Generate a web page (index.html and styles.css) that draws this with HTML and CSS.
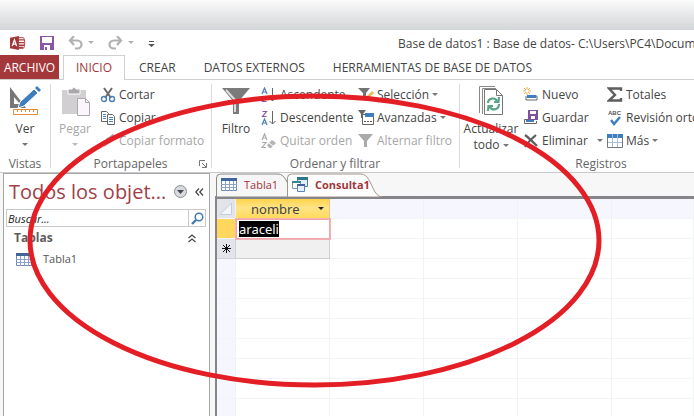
FILE: index.html
```html
<!DOCTYPE html>
<html lang="es">
<head>
<meta charset="utf-8">
<title>Base de datos1</title>
<link rel="stylesheet" href="styles.css">
</head>
<body>
<div class="app">
  <div class="desktop"></div>
  <header class="titlebar">
    <div class="quick">
      <svg class="logo" width="16" height="16" viewBox="0 0 18 16"><path d="M9 2h6c2 0 2 12 0 12H9z" fill="#fff" stroke="#a4373a"/><path d="M10 4.500h6M10 7.500h6M10 10.500h6M10 13h5" stroke="#a4373a" stroke-width="1.500"/><path d="M0 2 10 0v16L0 14z" fill="#a4373a"/><path d="M2.500 11.500 5 4.500l2.500 7M3.500 9.300h3" fill="none" stroke="#fff" stroke-width="1.500"/></svg>
      <button class="tool" aria-label="Guardar"><svg width="14" height="14" viewBox="0 0 14 14"><path d="M0 0h14v14H0z" fill="#8a55a8"/><path d="M2 1h10v6H2zM4 9h6v5H4z" fill="#fff"/><path d="M5 11h2v3H5z" fill="#8a55a8"/></svg></button>
      <button class="tool" aria-label="Deshacer"><svg width="26" height="14" viewBox="0 0 26 14"><path d="M6 0 2 4.500l4 4.500M2 4.500h7c6 0 6 8 0 8H7" fill="none" stroke="#b1b1b1" stroke-width="2.200"/><path d="M20 5h6l-3 3z" fill="#b1b1b1"/></svg></button>
      <button class="tool" aria-label="Rehacer"><svg width="26" height="14" viewBox="0 0 26 14"><path d="m9 0 4 4.500L9 9M13 4.500H6c-6 0-6 8 0 8h2" fill="none" stroke="#b1b1b1" stroke-width="2.200"/><path d="M20 5h6l-3 3z" fill="#b1b1b1"/></svg></button>
      <button class="tool" aria-label="Personalizar"><svg width="7" height="14" viewBox="0 0 7 14"><path d="M1 5.500h5" stroke="#555"/><path d="M0 8h7l-3.500 3z" fill="#555"/></svg></button>
    </div>
    <h1 class="title">Base de datos1 : Base de datos- C:\Users\PC4\Documen</h1>
  </header>
  <nav class="menu">
    <button class="menu-item file">ARCHIVO</button>
    <button class="menu-item active">INICIO</button>
    <button class="menu-item">CREAR</button>
    <button class="menu-item">DATOS EXTERNOS</button>
    <button class="menu-item">HERRAMIENTAS DE BASE DE DATOS</button>
  </nav>
  <div class="ribbon">
    <section class="group views">
      <div class="controls">
        <button class="big"><svg width="32" height="30" viewBox="0 0 32 30"><path d="M1 1v21h16z" fill="#777"/><path d="M5 11v7h6z" fill="#fff"/><path d="m9 22 2-6L25 3l4 4-14 13z" fill="#3e7ec0" stroke="#fff"/><path d="m26 2 2-2 4 4-2 2z" fill="#3e7ec0"/><path d="M4.500 23.500h24v5h-24z" fill="#fff" stroke="#e58a3c"/><path d="M8.500 24v2m4-2v2m4-2v2m4-2v2m4-2v2" stroke="#e58a3c"/></svg><span>Ver</span><i class="arrow"></i></button>
      </div>
      <h2>Vistas</h2>
    </section>
    <section class="group clipboard">
      <div class="controls">
        <button class="big off"><svg width="32" height="30" viewBox="0 0 32 30"><path d="M3 4h24v24H3z" fill="#d2cfd3"/><path d="M9 8V3h4q2-4 4 0h4v5z" fill="#aaa8ab" stroke="#fff"/><path d="M18.500 12.500h8l4 4v13h-12z" fill="#fbf6fc" stroke="#aaa"/><path d="M26.500 12.500v4h4" fill="none" stroke="#aaa"/></svg><span>Pegar</span><i class="arrow"></i></button>
        <div class="stack">
          <button class="small"><svg width="16" height="16" viewBox="0 0 16 16"><path d="m4 1 7 10M12 1 5 11" stroke="#686868" stroke-width="2"/><circle cx="4" cy="12" r="2.500" fill="none" stroke="#4b7fb5" stroke-width="1.400"/><circle cx="12" cy="12" r="2.500" fill="none" stroke="#4b7fb5" stroke-width="1.400"/></svg><span>Cortar</span></button>
          <button class="small"><svg width="16" height="16" viewBox="0 0 16 16"><path d="M1.500 1.500h5l2 2v8h-7z" fill="#fff" stroke="#666"/><path d="M3 4.500h3m-3 2h3m-3 2h3" stroke="#4b7fb5"/><path d="M7.500 4.500h5l2 2v8h-7z" fill="#fff" stroke="#666"/><path d="M9 7.500h4m-4 2h4m-4 2h4" stroke="#4b7fb5"/></svg><span>Copiar</span></button>
          <button class="small off"><svg width="16" height="16" viewBox="0 0 16 16"><path d="m1 11 5-5 4 4-5 4z" fill="#d6d2d6"/><path d="m7 5 4 4m-2-3 5-4" stroke="#aaa" stroke-width="3"/></svg><span>Copiar formato</span></button>
        </div>
      </div>
      <h2>Portapapeles</h2>
      <button class="launcher" aria-label="Opciones del portapapeles"><svg width="8" height="8" viewBox="0 0 8 8"><path d="M.5 6V.5H6M3 3l4 4M7.500 3v4.500H3" fill="none" stroke="#777"/></svg></button>
    </section>
    <section class="group sort">
      <div class="controls">
        <button class="big"><svg width="28" height="30" viewBox="0 0 28 30"><path d="M0 2h28L17 15v13h-6V15z" fill="#7b7b7b"/><path d="m4 4 9 10v12" fill="none" stroke="#ddd" stroke-width="2"/></svg><span>Filtro</span></button>
        <div class="stack">
          <button class="small"><svg width="16" height="16" viewBox="0 0 16 16"><path d="m1 7 2.500-6L6 7M2 5h3" fill="none" stroke="#4b7fb5" stroke-width="1.200"/><path d="M1.500 9.500h4l-4 5h4" fill="none" stroke="#8a55a8" stroke-width="1.200"/><path d="M11.500 1v13m-3-3 3 3 3-3" fill="none" stroke="#666"/></svg><span>Ascendente</span></button>
          <button class="small"><svg width="16" height="16" viewBox="0 0 16 16"><path d="M1.500 1.500h4l-4 5h4" fill="none" stroke="#8a55a8" stroke-width="1.200"/><path d="m1 15 2.500-6L6 15m-4-2h3" fill="none" stroke="#4b7fb5" stroke-width="1.200"/><path d="M11.500 1v13m-3-3 3 3 3-3" fill="none" stroke="#666"/></svg><span>Descendente</span></button>
          <button class="small off"><svg width="16" height="16" viewBox="0 0 16 16"><path d="m1 7 2.500-6L6 7M2 5h3M1 9.500h4l-4 5h4" fill="none" stroke="#aaa" stroke-width="1.200"/><path d="m6 12 5-5 4 3-5 5H8z" fill="#b5b5b5"/><path d="m8 10 4 3" stroke="#fff"/></svg><span>Quitar orden</span></button>
        </div>
        <div class="stack">
          <button class="small"><svg width="16" height="16" viewBox="0 0 16 16"><path d="M0 1h12L8 6v7H5V6z" fill="#737373"/><path d="m8 12 1-3 5-5 2 2-5 5z" fill="#f0b95c"/></svg><span>Selección</span><i class="arrow"></i></button>
          <button class="small"><svg width="16" height="16" viewBox="0 0 16 16"><path d="M4.500 4.500h11v10h-11z" fill="#fff" stroke="#666"/><path d="M7 3h9v4H7z" fill="#3e7ec0"/><path d="M0 0h8L5 4v4H3V4z" fill="#666"/><path d="M6 11.500h2m1 0h2m1 0h2" stroke="#555"/></svg><span>Avanzadas</span><i class="arrow"></i></button>
          <button class="small off"><svg width="16" height="16" viewBox="0 0 16 16"><path d="M0 1h15L9 8v6H6V8z" fill="#aaa"/></svg><span>Alternar filtro</span></button>
        </div>
      </div>
      <h2>Ordenar y filtrar</h2>
    </section>
    <section class="group records">
      <div class="controls">
        <button class="big"><svg width="28" height="30" viewBox="0 0 28 30"><path d="M2.500 27V.5H18M5.500 28V2.500H19" fill="none" stroke="#888"/><path d="M7.500 3.500h12l6 6v19h-18z" fill="#fff" stroke="#777"/><path d="M19.500 4v5.500h6" fill="none" stroke="#777"/><path d="M11 17c0-5 7-6 9-2m2-4-.5 5H17M22 18c0 6-7 7-9 3m-2 4 .5-5H16" fill="none" stroke="#5da387" stroke-width="2.200"/></svg><span>Actualizar<br>todo <i class="arrow"></i></span></button>
        <div class="stack">
          <button class="small"><svg width="16" height="16" viewBox="0 0 16 16"><path d="M7 9h7v4H3V9" fill="none" stroke="#666"/><path d="M4 8h9v3H4z" fill="#3e7ec0"/><path d="M4 0v8M0 4h8M1 1l6 6m0-6L1 7" stroke="#efad50"/><circle cx="4" cy="4" r="1.500" fill="#fff"/></svg><span>Nuevo</span></button>
          <button class="small"><svg width="16" height="16" viewBox="0 0 16 16"><path d="M5 9.500H1.500v4h12V11" fill="none" stroke="#666"/><path d="M3 10h8v2H3z" fill="#3e7ec0"/><path d="M5 0h10v10H5z" fill="#8050a0"/><path d="M7 1h6v3H7zM8 6h4v3H8z" fill="#fff"/></svg><span>Guardar</span></button>
          <button class="small"><svg width="16" height="16" viewBox="0 0 16 16"><path d="M2 2c4 3 8 7 12 11M13 2C8 6 5 9 2 14" fill="none" stroke="#5e5e5e" stroke-width="2.200"/></svg><span>Eliminar</span><i class="arrow apart"></i></button>
        </div>
        <div class="stack">
          <button class="small"><svg width="16" height="16" viewBox="0 0 16 16"><path d="M14 4V1.500H2L8 8l-6 5.500h12V11" fill="none" stroke="#5e5e5e" stroke-width="2.400"/></svg><span>Totales</span></button>
          <button class="small"><svg width="16" height="16" viewBox="0 0 16 16"><text x="1" y="5" class="abc">ABC</text><path d="m4 10 3 4 6-7" fill="none" stroke="#3e7ec0" stroke-width="2.400"/></svg><span>Revisión orto</span></button>
          <button class="small"><svg width="16" height="16" viewBox="0 0 16 16"><path d="M.5 1.500h15v13H.5z" fill="#fff" stroke="#777"/><path d="M0 1h16v4H0z" fill="#3e7ec0"/><path d="M5.500 1v13m5-13v13M1 9.500h14" stroke="#a9bdd0"/></svg><span>Más</span><i class="arrow"></i></button>
        </div>
      </div>
      <h2>Registros</h2>
    </section>
  </div>
  <main class="workspace">
    <aside class="pane">
      <div class="pane-head">
        <h2>Todos los objet...</h2>
        <button class="round" aria-label="Menú"><svg width="13" height="13" viewBox="0 0 13 13"><circle cx="6.500" cy="6.500" r="6" fill="#d9dade" stroke="#8c8f96"/><path d="M3 5h7L6.500 9z" fill="#444a58"/></svg></button>
        <button aria-label="Contraer panel"><svg width="9" height="8" viewBox="0 0 9 8"><path d="M4 .5.800 4 4 7.500M8 .5 4.800 4 8 7.500" fill="none" stroke="#444" stroke-width="1.200"/></svg></button>
      </div>
      <div class="search">
        <input type="text" placeholder="Buscar..." aria-label="Buscar">
        <button aria-label="Buscar"><svg width="13" height="13" viewBox="0 0 13 13"><circle cx="8" cy="5" r="3.800" fill="#fff" stroke="#4579ad" stroke-width="1.500"/><path d="m5 8-4 4" stroke="#4579ad" stroke-width="2.400"/></svg></button>
      </div>
      <button class="section-head"><span>Tablas</span><svg width="8" height="9" viewBox="0 0 8 9"><path d="M.5 4 4 1l3.500 3M.5 8 4 5l3.500 3" fill="none" stroke="#444" stroke-width="1.200"/></svg></button>
      <a class="object" href="#"><svg width="16" height="13" viewBox="0 0 16 13"><path d="M.5.500h15v12H.5z" fill="#fff" stroke="#7188b0"/><path d="M0 0h16v3H0z" fill="#42659c"/><path d="M4.500 3v10m4-10v10m4-10v10M0 6.500h16M0 9.500h16" stroke="#8ba3cb"/></svg><span>Tabla1</span></a>
    </aside>
    <section class="document">
      <div class="doc-tabs">
        <button class="doc-tab"><svg class="shape" viewBox="0 0 84 24" preserveAspectRatio="none"><path d="M.5 24V5q0-4 4-4H62c7 0 9 9 14 18q3 5 7 5z" fill="#f6f6f7" stroke="#888"/></svg><svg width="16" height="13" viewBox="0 0 16 13"><path d="M.5.500h15v12H.5z" fill="#fff" stroke="#7188b0"/><path d="M0 0h16v3H0z" fill="#42659c"/><path d="M4.500 3v10m4-10v10m4-10v10M0 6.500h16M0 9.500h16" stroke="#8ba3cb"/></svg><span>Tabla1</span></button>
        <button class="doc-tab current"><svg class="shape" viewBox="0 0 96 24" preserveAspectRatio="none"><path d="M.5 24V5q0-4 4-4H74c7 0 9 9 14 18q3 5 7 5z" fill="#fff" stroke="#a39588"/></svg><svg width="16" height="15" viewBox="0 0 16 15"><path d="M5.500.500h10v9h-10z" fill="#e1eef3" stroke="#577e92"/><path d="M5 0h11v3H5z" fill="#2e7689"/><path d="M.5 4.500h8v7h-8z" fill="#fff" stroke="#6e9bb0"/><path d="M0 4h9v2H0z" fill="#348492"/><path d="M5.500 7.500h7v7h-7z" fill="#e8f0fa" stroke="#5e82b7"/><path d="M5 7h8v2H5z" fill="#41629b"/></svg><span>Consulta1</span></button>
      </div>
      <div class="sheet">
        <table>
          <colgroup><col class="c-sel"><col class="c-field"><col class="c-field"><col class="c-field"><col class="c-field"><col></colgroup>
          <thead><tr><th class="corner"><svg width="12" height="12" viewBox="0 0 12 12"><path d="M11.500 0v11.500H0z" fill="#f3f5f8" stroke="#c5ced8"/></svg></th><th class="field"><div><span>nombre</span><i class="arrow"></i></div></th><th></th><th></th><th></th><th></th></tr></thead>
          <tbody>
            <tr><td class="row-on"></td><td class="editing"><mark>araceli</mark></td><td></td><td></td><td></td><td></td></tr>
            <tr><td class="row-new"><svg width="9" height="9" viewBox="0 0 9 9"><path d="M4.500 0v9M0 4.500h9M1 1l7 7m0-7L1 8" stroke="#111"/></svg></td><td class="blank"></td><td></td><td></td><td></td><td></td></tr>
            <tr><td></td><td></td><td></td><td></td><td></td><td></td></tr>
            <tr><td></td><td></td><td></td><td></td><td></td><td></td></tr>
            <tr><td></td><td></td><td></td><td></td><td></td><td></td></tr>
            <tr><td></td><td></td><td></td><td></td><td></td><td></td></tr>
            <tr><td></td><td></td><td></td><td></td><td></td><td></td></tr>
            <tr><td></td><td></td><td></td><td></td><td></td><td></td></tr>
            <tr><td></td><td></td><td></td><td></td><td></td><td></td></tr>
            <tr><td></td><td></td><td></td><td></td><td></td><td></td></tr>
          </tbody>
        </table>
      </div>
    </section>
  </main>
  <svg class="annotation" viewBox="0 0 694 416" preserveAspectRatio="none"><ellipse cx="314.500" cy="240.500" rx="284.500" ry="144.500" fill="none" stroke="#e31e25" stroke-width="5"/></svg>
</div>
</body>
</html>
```
FILE: styles.css
```css
* { box-sizing: border-box; }
body {
  margin: 0;
  font: 12px/16px "Open Sans", "Noto Sans", sans-serif;
  color: #444;
  background: #fff;
}
button {
  margin: 0;
  padding: 0;
  border: 0;
  background: none;
  font: inherit;
  color: inherit;
  white-space: nowrap;
}
h1, h2 { margin: 0; font: inherit; }
svg { display: block; flex: none; }
.app {
  position: relative;
  display: flex;
  flex-direction: column;
  height: 100vh;
  overflow: hidden;
}
.desktop { flex: none; height: 30px; background: linear-gradient(#fbfbfb, #e6e7e8 50%, #d3d6d8); }

.titlebar { flex: none; display: flex; align-items: center; height: 25px; padding-left: 10px; overflow: hidden; }
.quick { display: flex; align-items: center; gap: 14px; width: 388px; flex: none; }
.title { white-space: nowrap; padding-top: 2px; }

.menu { flex: none; display: flex; height: 25px; border-bottom: 1px solid #d0d0d0; }
.menu-item { padding: 1px 14px 0; }
.menu-item.file { width: 59px; padding: 1px 0 0; margin-right: 4px; background: #a4373a; color: #fff; }
.menu-item.active {
  width: 62px;
  padding: 0;
  margin-bottom: -1px;
  border: 1px solid #d0d0d0;
  border-bottom: 0;
  background: #fff;
  color: #a4373a;
}

.ribbon { flex: none; display: flex; height: 93px; border-bottom: 1px solid #c9c9cb; overflow: hidden; }
.group { position: relative; flex: none; padding-top: 3px; }
.group + .group::before {
  content: "";
  position: absolute;
  left: 0;
  top: 4px;
  bottom: 4px;
  border-left: 1px solid #dadada;
}
.views { width: 50px; }
.clipboard { width: 161px; }
.sort { width: 248px; }
.records { width: 284px; }
.group h2 { text-align: center; color: #666; line-height: 18px; }
.controls { display: flex; height: 72px; }
.big { display: flex; flex-direction: column; align-items: center; justify-content: flex-start; width: 50px; padding-top: 3px; }
.big > span { margin-top: 5px; }
.big > .arrow { margin-top: 6px; }
.records .big { width: 64px; }
.stack { display: flex; flex-direction: column; }
.small { display: flex; align-items: center; height: 23px; gap: 3px; }
.sort .stack { width: 97px; }
.records .stack { width: 84px; }
.off { color: #a6a6a6; }
.abc { font: bold 6px "Liberation Sans", sans-serif; fill: #555; }
.arrow {
  display: inline-block;
  flex: none;
  border: 3px solid transparent;
  border-top-color: #777;
  border-bottom: 0;
  vertical-align: middle;
}
.off .arrow { border-top-color: #bbb; }
.arrow.apart { margin-left: 6px; }
.launcher { position: absolute; right: 4px; bottom: 4px; }

.workspace { flex: 1; display: flex; min-height: 0; background: #f7f7f7; }
.pane {
  flex: none;
  width: 207px;
  margin-left: 3px;
  padding: 0 3px 0 2px;
  border: 1px solid #a3a5a9;
  border-bottom: 0;
  background: #fff;
}
.pane-head { display: flex; align-items: center; height: 35px; padding: 0 2px 0 3px; }
.pane-head h2 { flex: 1; font-size: 20px; line-height: 28px; color: #a04048; white-space: nowrap; }
.pane-head .round { margin-right: 8px; }
.search { display: flex; height: 18px; border: 1px solid #c9c9c9; }
.search input {
  flex: 1;
  min-width: 0;
  padding: 0 1px;
  border: 0;
  outline: 0;
  font: italic 11px "Open Sans", "Noto Sans", sans-serif;
}
.search input::placeholder { color: #222; opacity: 1; }
.search button { display: grid; place-items: center; width: 17px; border-left: 1px solid #c9c9c9; }
.section-head {
  display: flex;
  align-items: center;
  justify-content: space-between;
  width: 100%;
  height: 22px;
  padding: 0 10px 0 8px;
  font-weight: bold;
  color: #5d5d5d;
}
.object { display: flex; align-items: center; gap: 11px; height: 20px; padding-left: 10px; font-size: 11px; color: #555; text-decoration: none; }

.document { flex: 1; display: flex; flex-direction: column; min-width: 0; margin-left: 5px; }
.doc-tabs { flex: none; display: flex; height: 23px; padding-left: 1px; }
.doc-tab { position: relative; display: flex; align-items: center; gap: 7px; width: 71px; padding-left: 5px; font-size: 11px; color: #a3343a; }
.doc-tab > * { position: relative; }
.doc-tab.current { width: 96px; font-weight: bold; }
.doc-tab .shape { position: absolute; left: 0; top: 0; width: 84px; height: 24px; }
.doc-tab.current .shape { width: 96px; }
.sheet { flex: 1; min-height: 0; border-top: 3px solid #85858a; border-left: 2px solid #85858a; background: #fff; overflow: hidden; }
table { width: 100%; table-layout: fixed; border-collapse: separate; border-spacing: 0; }
.c-sel { width: 19px; }
.c-field { width: 94px; }
th, td {
  height: 20px;
  padding: 0;
  border-right: 1px solid #f1f2f4;
  border-bottom: 1px solid #f3f4f5;
  font: 13px/16px "Noto Sans", sans-serif;
  text-align: left;
  vertical-align: middle;
}
th, td:first-child { background: #f6f7fe; }
th svg, .row-new svg { margin: 0 auto; }
th.corner { background: #e2e4e9; }
th.field { background: linear-gradient(#ffd34a, #ffe487 45%, #ffda5c); border-color: #dfc78d; }
.field div { display: flex; align-items: center; justify-content: space-between; padding: 0 5px 0 15px; }
.field .arrow { border-top-color: #222; }
td.row-on { background: #ffd65e; border-right-color: #dcbc68; }
td.row-new { background: #e2e4e9; border-color: #cfd1d5; }
td.editing { border: 1px solid #f0a5a8; padding-left: 2px; outline: 1px solid #f0b4b7; }
td.blank { background: #f0f0f1; border-color: #cfcfd2; }
mark { display: inline-block; background: #000; color: #fff; }

.annotation { position: absolute; inset: 0; width: 100%; height: 100%; pointer-events: none; }
```
